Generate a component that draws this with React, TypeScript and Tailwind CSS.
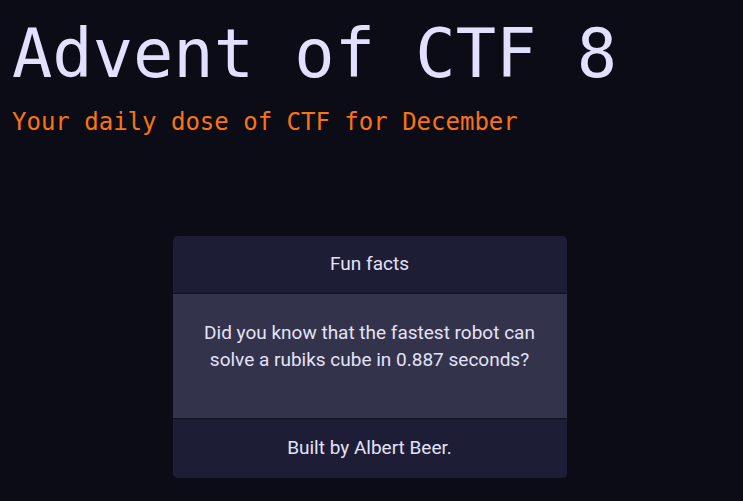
import React from "react";

const mono = { fontFamily: '"DejaVu Sans Mono", monospace' };

export default function App() {
  return (
    <div className="min-h-screen w-full bg-[#0c0c16] text-[#e0e0ff]">
      <header className="px-3 pt-[14px]" style={mono}>
        <h1 className="text-[67px] leading-[80px] text-[#e2e0ff]">Advent of CTF 8</h1>
        <p className="mt-[13px] text-[24px] leading-[30px] text-[#f97316]">
          Your daily dose of CTF for December
        </p>
      </header>

      <main className="flex justify-center pr-[4px] pt-[99px] font-['Roboto',sans-serif]">
        <div className="w-[394px] overflow-hidden rounded-[5px] bg-[#1d1e36] text-[19px] text-[#e4e2f7]">
          <div className="flex h-[58px] items-center justify-center border-b border-[#12121f]">
            Fun facts
          </div>
          <div className="h-[124px] bg-[#33334b] px-6 pt-[25px] text-center leading-[27px]">
            Did you know that the fastest robot can solve a rubiks cube in 0.887 seconds?
          </div>
          <div className="flex h-[60px] items-center justify-center border-t border-[#12121f]">
            Built by Albert Beer.
          </div>
        </div>
      </main>
    </div>
  );
}
